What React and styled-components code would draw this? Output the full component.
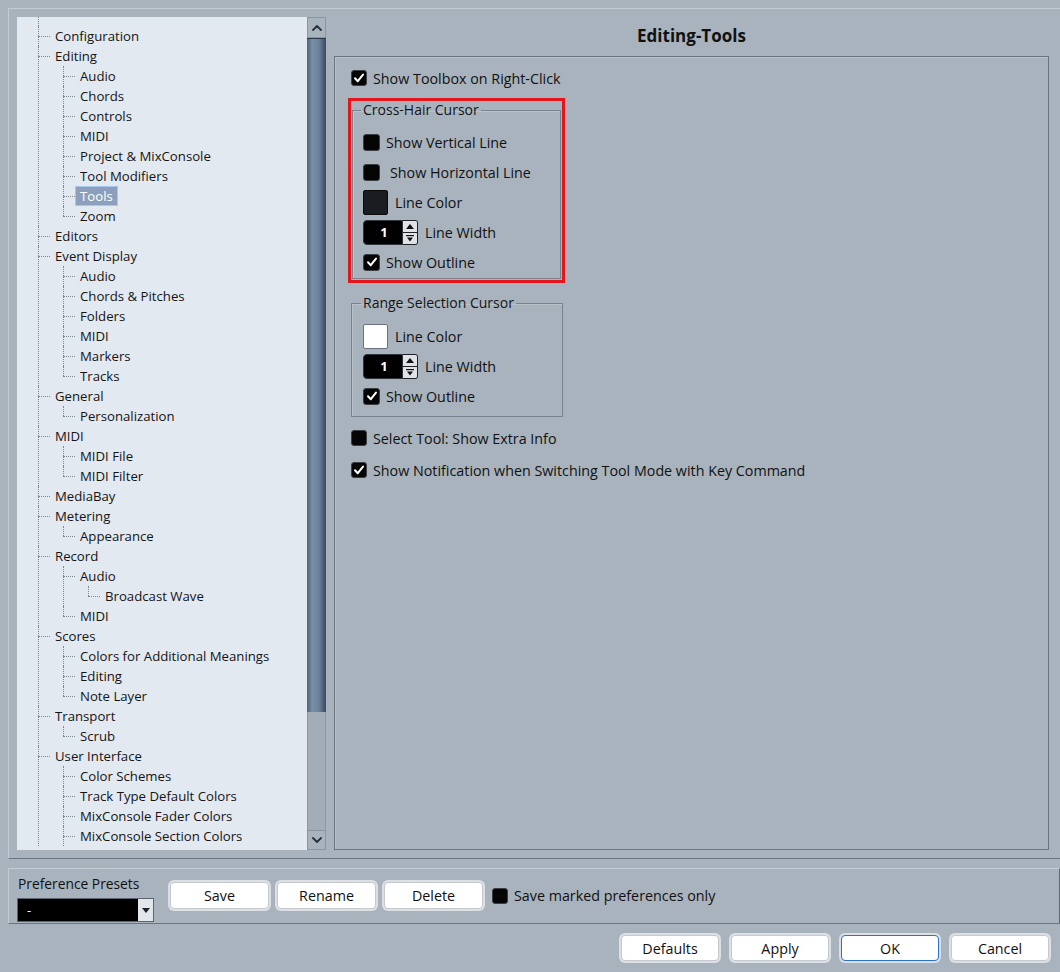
import React from "react";
import styled, { createGlobalStyle } from "styled-components";

const GlobalStyle = createGlobalStyle`
  html, body { margin: 0; padding: 0; background: #a8b3be; }
  * { box-sizing: border-box; }
`;

const treeData = [
  { label: "Configuration" },
  {
    label: "Editing",
    children: [
      { label: "Audio" },
      { label: "Chords" },
      { label: "Controls" },
      { label: "MIDI" },
      { label: "Project & MixConsole" },
      { label: "Tool Modifiers" },
      { label: "Tools", selected: true },
      { label: "Zoom" },
    ],
  },
  { label: "Editors" },
  {
    label: "Event Display",
    children: [
      { label: "Audio" },
      { label: "Chords & Pitches" },
      { label: "Folders" },
      { label: "MIDI" },
      { label: "Markers" },
      { label: "Tracks" },
    ],
  },
  { label: "General", children: [{ label: "Personalization" }] },
  { label: "MIDI", children: [{ label: "MIDI File" }, { label: "MIDI Filter" }] },
  { label: "MediaBay" },
  { label: "Metering", children: [{ label: "Appearance" }] },
  {
    label: "Record",
    children: [{ label: "Audio", children: [{ label: "Broadcast Wave" }] }, { label: "MIDI" }],
  },
  {
    label: "Scores",
    children: [{ label: "Colors for Additional Meanings" }, { label: "Editing" }, { label: "Note Layer" }],
  },
  { label: "Transport", children: [{ label: "Scrub" }] },
  {
    label: "User Interface",
    open: true,
    children: [
      { label: "Color Schemes" },
      { label: "Track Type Default Colors" },
      { label: "MixConsole Fader Colors" },
      { label: "MixConsole Section Colors" },
    ],
  },
];

const Window = styled.div`
  width: 1060px;
  height: 972px;
  background: #a8b3be;
  font-family: "Open Sans", "Noto Sans", sans-serif;
  color: #111;
  display: flex;
  flex-direction: column;
  overflow: hidden;
`;

const MainArea = styled.div`
  margin: 8px 0 0 8px;
  height: 851px;
  padding: 8px 0 0 8px;
  border-top: 1px solid #c3cbd3;
  border-left: 1px solid #c3cbd3;
  border-bottom: 1px solid #6b7580;
  display: flex;
`;

const TreePane = styled.div`
  display: flex;
  width: 309px;
  height: 833px;
`;

const TreeView = styled.div`
  flex: 1;
  background: #e3e9f1;
  overflow: hidden;
`;

const TreeRoot = styled.ul`
  position: relative;
  list-style: none;
  margin: 0;
  padding: 9px 0 0 21px;
  font-size: 13.2px;
  line-height: 20px;

  &::before {
    content: "";
    position: absolute;
    left: 21px;
    top: 0;
    height: 9px;
    border-left: 1px dotted #7e8791;
  }
`;

const Group = styled.ul`
  list-style: none;
  margin: 0 0 0 8px;
  padding: 0;
`;

const Item = styled.li`
  position: relative;
  padding-left: 17px;

  &::before {
    content: "";
    position: absolute;
    left: 0;
    top: 10px;
    width: 12px;
    border-top: 1px dotted #7e8791;
  }

  &::after {
    content: "";
    position: absolute;
    left: 0;
    top: 0;
    ${(p) => (p.$last ? "height: 10px;" : "bottom: 0;")}
    border-left: 1px dotted #7e8791;
  }
`;

const Label = styled.div`
  width: fit-content;
  height: 20px;
  line-height: 18px;
  margin-left: -5px;
  padding: 0 4px;
  white-space: nowrap;
  border: 1px solid ${(p) => (p.$selected ? "#a9c5ee" : "transparent")};
  background: ${(p) => (p.$selected ? "#8c9fbd" : "transparent")};
  color: ${(p) => (p.$selected ? "#fff" : "#141414")};
`;

const Scrollbar = styled.div`
  width: 19px;
  display: flex;
  flex-direction: column;
`;

const ScrollButton = styled.div`
  height: ${(p) => p.$h}px;
  background: #a9b3be;
  border: 1px solid #8a95a0;
  display: flex;
  align-items: center;
  justify-content: center;
`;

const Thumb = styled.div`
  height: 674px;
  background: linear-gradient(90deg, #4f6279 0%, #7a90a9 28%, #6c829c 62%, #3b4a5d 100%);
  border-top: 1px solid #2f3a48;
`;

const Track = styled.div`
  flex: 1;
  background: #a3adb8;
  border-left: 1px solid #8e99a4;
  border-right: 1px solid #8e99a4;
`;

const RightPane = styled.div`
  margin-left: 8px;
  width: 715px;
  display: flex;
  flex-direction: column;
`;

const Title = styled.div`
  height: 39px;
  display: flex;
  align-items: center;
  justify-content: center;
  font-size: 17px;
  font-weight: 700;
  padding-bottom: 3px;
`;

const ContentBox = styled.div`
  height: 794px;
  border: 1px solid #6b7580;
  box-shadow: inset 1px 1px 0 #b8c1ca;
  padding: 11px 0 0 16px;
  display: flex;
  flex-direction: column;
  align-items: flex-start;
`;

const OptionRow = styled.div`
  display: flex;
  align-items: center;
  height: ${(p) => p.$h || 20}px;
  margin-top: ${(p) => p.$mt || 0}px;
  font-size: 14.3px;
  white-space: nowrap;
`;

const Text = styled.span`
  margin-left: ${(p) => p.$gap}px;
`;

const Box = styled.span`
  width: ${(p) => p.$size}px;
  height: ${(p) => p.$size}px;
  background: #050505;
  border: 1px solid #3a3f45;
  border-radius: 3px;
  display: flex;
  align-items: center;
  justify-content: center;
  flex-shrink: 0;
`;

const Highlight = styled.div`
  margin: 10px 0 0 -3px;
  width: 217px;
  height: 185px;
  border: 3px solid #e5141d;
  display: flex;
`;

const GroupBox = styled.fieldset`
  margin: ${(p) => p.$margin};
  width: ${(p) => p.$w}px;
  min-width: 0;
  padding: ${(p) => p.$pad};
  border: 1px solid #78838e;
  box-shadow: inset 1px 1px 0 #b9c2cb;
  display: flex;
  flex-direction: column;
  gap: 6px;
`;

const Legend = styled.legend`
  font-size: 14px;
  line-height: 18px;
  padding: 0 2px;
  margin-left: -2px;
  color: #141414;
`;

const Swatch = styled.span`
  width: 25px;
  height: 25px;
  background: ${(p) => p.$color};
  border: 1px solid ${(p) => (p.$color === "#ffffff" ? "#6a737e" : "#0a0a0a")};
  border-radius: 2px;
  flex-shrink: 0;
`;

const Spin = styled.span`
  width: 55px;
  height: 25px;
  display: flex;
  flex-shrink: 0;
`;

const SpinField = styled.span`
  flex: 1;
  background: #000;
  border: 1px solid #30353b;
  border-radius: 4px 0 0 4px;
  color: #fff;
  font-weight: 700;
  font-size: 13px;
  display: flex;
  align-items: center;
  justify-content: center;
  padding-left: 2px;
`;

const SpinButtons = styled.span`
  width: 15px;
  display: flex;
  flex-direction: column;
  border: 1px solid #1e2227;
  border-left: none;
  border-radius: 0 3px 3px 0;
  overflow: hidden;
`;

const SpinHalf = styled.span`
  flex: 1;
  background: #dfe3e8;
  display: flex;
  align-items: center;
  justify-content: center;
  & + & {
    border-top: 1px solid #1e2227;
  }
`;

const PresetsPanel = styled.div`
  margin: 9px 0 0 8px;
  height: 56px;
  border-top: 1px solid #c3cbd3;
  border-left: 1px solid #c3cbd3;
  border-bottom: 1px solid #6b7580;
  border-right: 1px solid #5f6974;
  padding: 6px 8px 0 8px;
  display: flex;
  align-items: flex-start;
`;

const PresetColumn = styled.div`
  display: flex;
  flex-direction: column;
  font-size: 13.8px;
  line-height: 18px;
  padding-left: 1px;
`;

const Dropdown = styled.div`
  margin: 5px 0 0 -1px;
  width: 137px;
  height: 24px;
  background: #000;
  border: 1px solid #5b6470;
  color: #fff;
  font-size: 13px;
  display: flex;
  align-items: center;
  padding-left: 9px;
`;

const DropArrow = styled.span`
  margin-left: auto;
  width: 15px;
  height: 22px;
  background: #e3e7ec;
  display: flex;
  align-items: center;
  justify-content: center;
`;

const PresetActions = styled.div`
  margin: 7px 0 0 16px;
  display: flex;
  align-items: center;
  gap: 8px;
`;

const PushButton = styled.button`
  width: ${(p) => p.$w}px;
  height: ${(p) => p.$h}px;
  background: #fff;
  border: 1px solid ${(p) => (p.$focused ? "#2a72cc" : "#c5c9ce")};
  border-radius: 4px;
  box-shadow: 0 0 0 2px #dce0e5;
  font-family: inherit;
  font-size: 14.3px;
  color: #111;
  padding: 0;
`;

const CheckLabel = styled.div`
  display: flex;
  align-items: center;
  margin-left: 1px;
  font-size: 14.3px;
  white-space: nowrap;
`;

const ButtonRow = styled.div`
  margin-top: 11px;
  display: flex;
  justify-content: flex-end;
  gap: 12px;
  padding-right: 11px;
`;

function Check({ checked, size = 16 }) {
  return (
    <Box $size={size}>
      {checked && (
        <svg width="12" height="12" viewBox="0 0 12 12">
          <path d="M2 6.3 L4.8 9.2 L10 2.6" fill="none" stroke="#fff" strokeWidth="2" strokeLinecap="round" strokeLinejoin="round" />
        </svg>
      )}
    </Box>
  );
}

function SpinBox({ value }) {
  return (
    <Spin>
      <SpinField>{value}</SpinField>
      <SpinButtons>
        <SpinHalf>
          <svg width="8" height="5" viewBox="0 0 8 5">
            <path d="M0 5 L4 0 L8 5 Z" fill="#111" />
          </svg>
        </SpinHalf>
        <SpinHalf>
          <svg width="8" height="7" viewBox="0 0 8 7">
            <rect x="0" y="0" width="8" height="1.2" fill="#111" />
            <path d="M1 2.5 L7 2.5 L4 6.5 Z" fill="#111" />
          </svg>
        </SpinHalf>
      </SpinButtons>
    </Spin>
  );
}

function TreeNode({ node, last }) {
  return (
    <Item $last={last}>
      <Label $selected={node.selected}>{node.label}</Label>
      {node.children && (
        <Group>
          {node.children.map((child, i) => (
            <TreeNode
              key={child.label + i}
              node={child}
              last={!node.open && i === node.children.length - 1}
            />
          ))}
        </Group>
      )}
    </Item>
  );
}

function Chevron({ down }) {
  return (
    <svg width="10" height="6" viewBox="0 0 10 6">
      <path
        d={down ? "M1 1 L5 5 L9 1" : "M1 5 L5 1 L9 5"}
        fill="none"
        stroke="#27313c"
        strokeWidth="1.8"
        strokeLinecap="round"
        strokeLinejoin="round"
      />
    </svg>
  );
}

export default function App() {
  return (
    <Window>
      <GlobalStyle />
      <MainArea>
        <TreePane>
          <TreeView>
            <TreeRoot>
              {treeData.map((node, i) => (
                <TreeNode key={node.label + i} node={node} last={false} />
              ))}
            </TreeRoot>
          </TreeView>
          <Scrollbar>
            <ScrollButton $h={21}>
              <Chevron />
            </ScrollButton>
            <Thumb />
            <Track />
            <ScrollButton $h={20}>
              <Chevron down />
            </ScrollButton>
          </Scrollbar>
        </TreePane>

        <RightPane>
          <Title>Editing-Tools</Title>
          <ContentBox>
            <OptionRow>
              <Check checked />
              <Text $gap={6}>Show Toolbox on Right-Click</Text>
            </OptionRow>

            <Highlight>
              <GroupBox $w={209} $margin="0 1px 1px 1px" $pad="11px 8px 0 10px">
                <Legend>Cross-Hair Cursor</Legend>
                <OptionRow $h={24}>
                  <Check size={17} />
                  <Text $gap={6}>Show Vertical Line</Text>
                </OptionRow>
                <OptionRow $h={24}>
                  <Check size={17} />
                  <Text $gap={10}>Show Horizontal Line</Text>
                </OptionRow>
                <OptionRow $h={24}>
                  <Swatch $color="#1b1c1f" />
                  <Text $gap={7}>Line Color</Text>
                </OptionRow>
                <OptionRow $h={24}>
                  <SpinBox value="1" />
                  <Text $gap={7}>Line Width</Text>
                </OptionRow>
                <OptionRow $h={24}>
                  <Check checked size={17} />
                  <Text $gap={6}>Show Outline</Text>
                </OptionRow>
              </GroupBox>
            </Highlight>

            <GroupBox $w={212} $margin="11px 0 0 0" $pad="12px 8px 8px 11px">
              <Legend>Range Selection Cursor</Legend>
              <OptionRow $h={24}>
                <Swatch $color="#ffffff" />
                <Text $gap={7}>Line Color</Text>
              </OptionRow>
              <OptionRow $h={24}>
                <SpinBox value="1" />
                <Text $gap={7}>Line Width</Text>
              </OptionRow>
              <OptionRow $h={24}>
                <Check checked size={17} />
                <Text $gap={6}>Show Outline</Text>
              </OptionRow>
            </GroupBox>

            <OptionRow $mt={11}>
              <Check />
              <Text $gap={6}>Select Tool: Show Extra Info</Text>
            </OptionRow>
            <OptionRow $mt={12}>
              <Check checked />
              <Text $gap={6}>Show Notification when Switching Tool Mode with Key Command</Text>
            </OptionRow>
          </ContentBox>
        </RightPane>
      </MainArea>

      <PresetsPanel>
        <PresetColumn>
          <span>Preference Presets</span>
          <Dropdown>
            -
            <DropArrow>
              <svg width="8" height="5" viewBox="0 0 8 5">
                <path d="M0 0 L8 0 L4 5 Z" fill="#1d232a" />
              </svg>
            </DropArrow>
          </Dropdown>
        </PresetColumn>
        <PresetActions>
          <PushButton $w={99} $h={27}>Save</PushButton>
          <PushButton $w={99} $h={27}>Rename</PushButton>
          <PushButton $w={99} $h={27}>Delete</PushButton>
          <CheckLabel>
            <Check />
            <Text $gap={6}>Save marked preferences only</Text>
          </CheckLabel>
        </PresetActions>
      </PresetsPanel>

      <ButtonRow>
        <PushButton $w={98} $h={26}>Defaults</PushButton>
        <PushButton $w={98} $h={26}>Apply</PushButton>
        <PushButton $w={98} $h={26} $focused>OK</PushButton>
        <PushButton $w={98} $h={26}>Cancel</PushButton>
      </ButtonRow>
    </Window>
  );
}
